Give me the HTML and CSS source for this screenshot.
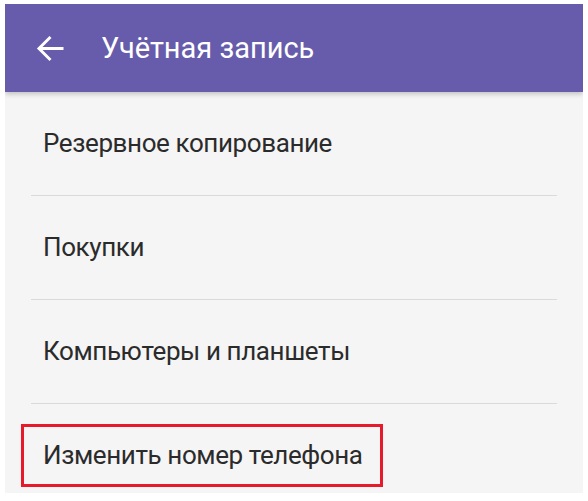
FILE: index.html
```html
<!DOCTYPE html>
<html lang="ru">
<head>
<meta charset="utf-8">
<link rel="stylesheet" href="styles.css">
</head>
<body>
<div class="screen">
  <header class="appbar">
    <svg class="back" viewBox="0 0 24 24" width="39" height="39"><path d="M20 12H5M12 4.9L4.9 12l7.1 7.1" fill="none" stroke="#fff" stroke-width="1.8"/></svg>
    <h1 class="title">Учётная запись</h1>
  </header>
  <ul class="list">
    <li class="item">Резервное копирование</li>
    <li class="item">Покупки</li>
    <li class="item">Компьютеры и планшеты</li>
    <li class="item">Изменить номер телефона</li>
  </ul>
  <div class="highlight"></div>
</div>
</body>
</html>
```
FILE: styles.css
```css
html, body {
  margin: 0;
  padding: 0;
  background: #ffffff;
}
body {
  padding: 4px 5px;
  font-family: Roboto, "Noto Sans", sans-serif;
}
.screen {
  position: relative;
  width: 578px;
  height: 489px;
  overflow: hidden;
  background: #f5f5f5;
}
.appbar {
  position: relative;
  z-index: 1;
  height: 88px;
  background: #665cab;
  display: flex;
  align-items: center;
  padding-left: 26px;
  box-shadow: 0 2px 5px rgba(0, 0, 0, 0.22);
}
.back {
  display: block;
  flex: none;
}
.title {
  margin: 0 0 0 31px;
  font-size: 29px;
  font-weight: 400;
  color: #ffffff;
}
.list {
  list-style: none;
  margin: 0;
  padding: 0;
}
.item {
  box-sizing: border-box;
  height: 104px;
  margin: 0 26px;
  padding-left: 12px;
  padding-bottom: 1px;
  border-bottom: 1px solid #dadada;
  display: flex;
  align-items: center;
  font-size: 26px;
  letter-spacing: -0.4px;
  color: #2b2b2b;
}
.highlight {
  position: absolute;
  left: 16px;
  top: 420px;
  width: 362px;
  height: 63px;
  box-sizing: border-box;
  border: 3px solid #e61a2b;
}
```
